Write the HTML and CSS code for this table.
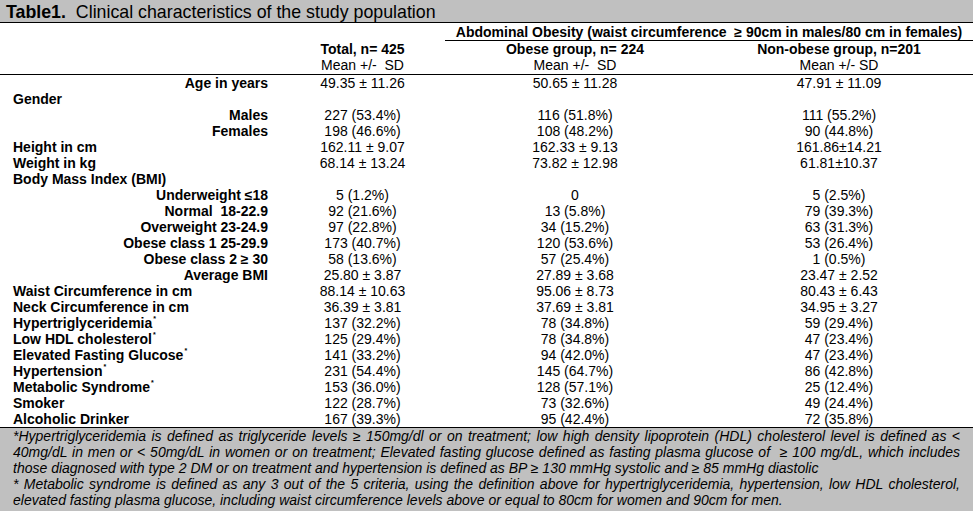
FILE: index.html
```html
<!DOCTYPE html>
<html lang="en">
<head>
<meta charset="utf-8">
<title>Table1. Clinical characteristics of the study population</title>
<link rel="stylesheet" href="styles.css">
</head>
<body>
<div class="page">
  <div class="title"><b>Table1.</b>&nbsp; Clinical characteristics of the study population</div>
  <table class="data">
    <colgroup>
      <col class="c-label"><col class="c-total"><col class="c-obese"><col class="c-non">
    </colgroup>
    <thead>
      <tr class="h-a">
        <th></th><th></th>
        <th colspan="2" class="span-head">Abdominal Obesity (waist circumference &nbsp;≥ 90cm in males/80 cm in females)</th>
      </tr>
      <tr class="h-b">
        <th></th>
        <th>Total, n= 425</th>
        <th>Obese group, n= 224</th>
        <th>Non-obese group, n=201</th>
      </tr>
      <tr class="h-c">
        <th></th>
        <td>Mean +/- &nbsp;SD</td>
        <td>Mean +/- &nbsp;SD</td>
        <td>Mean +/- SD</td>
      </tr>
    </thead>
    <tbody>
      <tr><th class="sub">Age in years</th><td>49.35 ± 11.26</td><td>50.65 ± 11.28</td><td>47.91 ± 11.09</td></tr>
      <tr><th class="main">Gender</th><td></td><td></td><td></td></tr>
      <tr><th class="sub">Males</th><td>227 (53.4%)</td><td>116 (51.8%)</td><td>111 (55.2%)</td></tr>
      <tr><th class="sub">Females</th><td>198 (46.6%)</td><td>108 (48.2%)</td><td>90 (44.8%)</td></tr>
      <tr><th class="main">Height in cm</th><td>162.11 ± 9.07</td><td>162.33 ± 9.13</td><td>161.86±14.21</td></tr>
      <tr><th class="main">Weight in kg</th><td>68.14 ± 13.24</td><td>73.82 ± 12.98</td><td>61.81±10.37</td></tr>
      <tr><th class="main">Body Mass Index (BMI)</th><td></td><td></td><td></td></tr>
      <tr><th class="sub">Underweight ≤18</th><td>5 (1.2%)</td><td>0</td><td>5 (2.5%)</td></tr>
      <tr><th class="sub">Normal &nbsp;18-22.9</th><td>92 (21.6%)</td><td>13 (5.8%)</td><td>79 (39.3%)</td></tr>
      <tr><th class="sub">Overweight 23-24.9</th><td>97 (22.8%)</td><td>34 (15.2%)</td><td>63 (31.3%)</td></tr>
      <tr><th class="sub">Obese class 1 25-29.9</th><td>173 (40.7%)</td><td>120 (53.6%)</td><td>53 (26.4%)</td></tr>
      <tr><th class="sub">Obese class 2 ≥ 30</th><td>58 (13.6%)</td><td>57 (25.4%)</td><td>1 (0.5%)</td></tr>
      <tr><th class="sub">Average BMI</th><td>25.80 ± 3.87</td><td>27.89 ± 3.68</td><td>23.47 ± 2.52</td></tr>
      <tr><th class="main">Waist Circumference in cm</th><td>88.14 ± 10.63</td><td>95.06 ± 8.73</td><td>80.43 ± 6.43</td></tr>
      <tr><th class="main">Neck Circumference in cm</th><td>36.39 ± 3.81</td><td>37.69 ± 3.81</td><td>34.95 ± 3.27</td></tr>
      <tr><th class="main">Hypertriglyceridemia<sup>*</sup></th><td>137 (32.2%)</td><td>78 (34.8%)</td><td>59 (29.4%)</td></tr>
      <tr><th class="main">Low HDL cholesterol<sup>*</sup></th><td>125 (29.4%)</td><td>78 (34.8%)</td><td>47 (23.4%)</td></tr>
      <tr><th class="main">Elevated Fasting Glucose<sup>*</sup></th><td>141 (33.2%)</td><td>94 (42.0%)</td><td>47 (23.4%)</td></tr>
      <tr><th class="main">Hypertension<sup>*</sup></th><td>231 (54.4%)</td><td>145 (64.7%)</td><td>86 (42.8%)</td></tr>
      <tr><th class="main">Metabolic Syndrome<sup>*</sup></th><td>153 (36.0%)</td><td>128 (57.1%)</td><td>25 (12.4%)</td></tr>
      <tr><th class="main">Smoker</th><td>122 (28.7%)</td><td>73 (32.6%)</td><td>49 (24.4%)</td></tr>
      <tr><th class="main">Alcoholic Drinker</th><td>167 (39.3%)</td><td>95 (42.4%)</td><td>72 (35.8%)</td></tr>
    </tbody>
  </table>
  <div class="notes">
    <p><span class="jl">*Hypertriglyceridemia is defined as triglyceride levels ≥ 150mg/dl or on treatment; low high density lipoprotein (HDL) cholesterol level is defined as &lt;</span><span class="jl">40mg/dL in men or &lt; 50mg/dL in women or on treatment; Elevated fasting glucose defined as fasting plasma glucose of &nbsp;≥ 100 mg/dL, which includes</span><span class="ll">those diagnosed with type 2 DM or on treatment and hypertension is defined as BP ≥ 130 mmHg systolic and ≥ 85 mmHg diastolic</span></p>
    <p><span class="jl">* Metabolic syndrome is defined as any 3 out of the 5 criteria, using the definition above for hypertriglyceridemia, hypertension, low HDL cholesterol,</span><span class="ll">elevated fasting plasma glucose, including waist circumference levels above or equal to 80cm for women and 90cm for men.</span></p>
  </div>
</div>
</body>
</html>
```

FILE: styles.css
```css
html, body {
  margin: 0;
  padding: 0;
  background: #ffffff;
}

body {
  font-family: "Liberation Sans", Arial, sans-serif;
  color: #000000;
  font-size: 14px;
}

.page {
  width: 973px;
  height: 511px;
  display: flex;
  flex-direction: column;
}

.title {
  background: #c0c0c0;
  height: 19px;
  padding: 3px 0 0 6px;
  line-height: 19px;
  font-size: 17.8px;
  border-bottom: 1px solid #000000;
  white-space: nowrap;
}

.title b {
  font-weight: bold;
}

.data {
  width: 973px;
  table-layout: fixed;
  border-collapse: collapse;
  border-spacing: 0;
}

.c-label { width: 280px; }
.c-total { width: 165px; }
.c-obese { width: 260px; }
.c-non { width: 268px; }

.data th,
.data td {
  padding: 0;
  height: 16px;
  line-height: 16px;
  font-size: 14px;
  white-space: nowrap;
  text-align: center;
  vertical-align: top;
}

.data thead th {
  font-weight: bold;
}

.data td {
  font-weight: normal;
}

.h-a th {
  height: 15px;
  padding-top: 1px;
}

.h-a .span-head {
  border-bottom: 1px solid #000000;
}

.h-c th,
.h-c td {
  height: 17px;
  border-bottom: 1px solid #000000;
}

.data tbody tr:last-child th,
.data tbody tr:last-child td {
  border-bottom: 1px solid #000000;
}

.data tbody th.main {
  text-align: left;
  padding-left: 13px;
  font-weight: bold;
}

.data tbody th.sub {
  text-align: right;
  padding-right: 12px;
  font-weight: bold;
}

.data sup {
  font-size: 7px;
  line-height: 0;
  vertical-align: 7px;
  margin-left: 1px;
}

.notes {
  flex: 1;
  background: #c0c0c0;
  padding: 0 13px;
  font-style: italic;
  font-size: 14px;
  line-height: 16px;
}

.notes p {
  margin: 0;
}

.notes .jl,
.notes .ll {
  display: block;
  white-space: nowrap;
}

.notes .jl {
  text-align: justify;
  text-align-last: justify;
  white-space: normal;
}

.notes .ll {
  text-align: left;
}
```
